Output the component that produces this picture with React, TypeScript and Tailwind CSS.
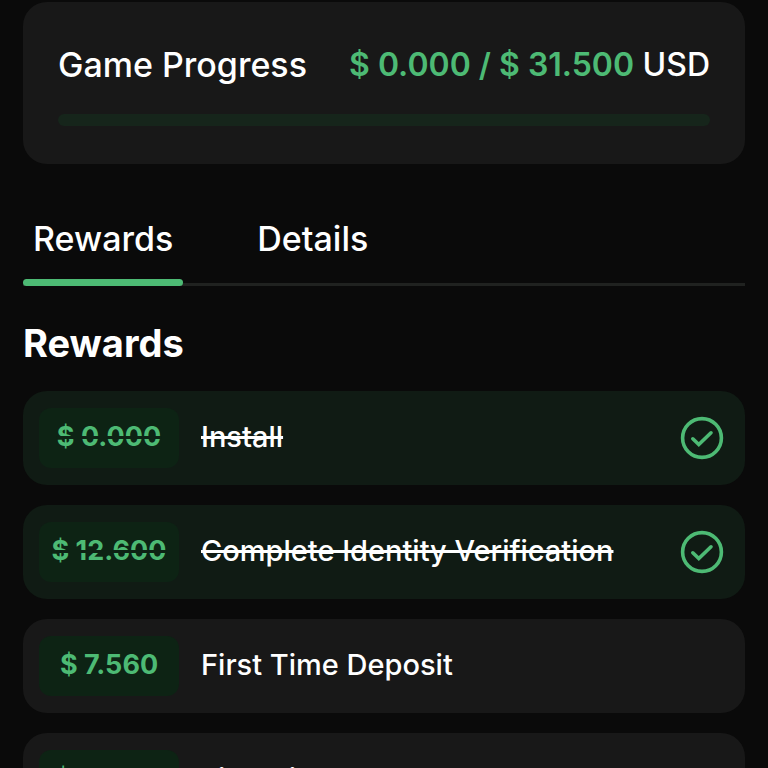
import { useState } from "react";
import { clsx } from "clsx";

interface Reward {
  amount: string;
  title: string;
  done: boolean;
}

const rewards: Reward[] = [
  { amount: "$ 0.000", title: "Install", done: true },
  { amount: "$ 12.600", title: "Complete Identity Verification", done: true },
  { amount: "$ 7.560", title: "First Time Deposit", done: false },
  { amount: "$ 11.340", title: "First Time Trade", done: false },
];

const tabs = ["Rewards", "Details"];

function CheckIcon() {
  return (
    <svg
      viewBox="0 0 44 44"
      className="size-11 shrink-0"
      fill="none"
      stroke="#4dba74"
      strokeWidth="3.6"
      strokeLinecap="round"
      role="img"
      aria-label="Completed"
    >
      <circle cx="22" cy="22" r="19.4" />
      <path d="M12.8 22.8L18.8 28.6L31 16.8" />
    </svg>
  );
}

function ProgressCard() {
  return (
    <section className="rounded-3xl bg-[#181818] px-[35px] py-[38px]">
      <div className="flex items-center justify-between text-[34px] leading-[50px] font-medium whitespace-nowrap">
        <h1>Game Progress</h1>
        <p className="text-[32px]">
          <span className="font-semibold text-[#4dba74]">
            $ 0.000 / $ 31.500
          </span>{" "}
          USD
        </p>
      </div>
      <div
        role="progressbar"
        aria-label="Game Progress"
        aria-valuenow={0}
        aria-valuemin={0}
        aria-valuemax={100}
        className="mt-6 h-3 rounded-full bg-[#16251b]"
      />
    </section>
  );
}

function RewardRow({ reward }: { reward: Reward }) {
  return (
    <li
      className={clsx(
        "flex h-[94px] items-center rounded-3xl pr-[21px] pl-4",
        reward.done ? "bg-[#101b14]" : "bg-[#181818]",
      )}
    >
      <span
        className={clsx(
          "flex h-[60px] w-[140px] shrink-0 items-center justify-center rounded-xl bg-[#0d2314] pb-0.5 text-[27px] font-bold text-[#4dba74]",
          reward.done && "line-through decoration-[#0d2314] decoration-3",
        )}
      >
        {reward.amount}
      </span>
      <span
        className={clsx(
          "ml-[22px] flex-1 pb-0.5 text-[29px] font-medium",
          reward.done && "line-through decoration-[3px]",
        )}
      >
        {reward.title}
      </span>
      {reward.done && <CheckIcon />}
    </li>
  );
}

export default function App() {
  const [active, setActive] = useState("Rewards");

  return (
    <main className="h-screen overflow-hidden bg-[#0a0a0a] px-[23px] pt-0.5 font-['Inter',sans-serif] text-white">
      <ProgressCard />

      <div
        role="tablist"
        className="mt-[47px] flex gap-16 border-b-3 border-[#202220]"
      >
        {tabs.map((tab) => (
          <button
            key={tab}
            type="button"
            role="tab"
            aria-selected={tab === active}
            onClick={() => setActive(tab)}
            className="-mb-[3px] flex flex-col text-[34px] leading-[56px] font-medium"
          >
            <span className="px-2.5">{tab}</span>
            <span
              className={clsx(
                "mt-3 h-[7px] w-full rounded-full",
                tab === active && "bg-[#4dba74]",
              )}
            />
          </button>
        ))}
      </div>

      <h2 className="mt-8 text-[38px] leading-[50px] font-bold">Rewards</h2>

      <ul className="mt-[23px] flex flex-col gap-5">
        {rewards.map((reward) => (
          <RewardRow key={reward.title} reward={reward} />
        ))}
      </ul>
    </main>
  );
}
